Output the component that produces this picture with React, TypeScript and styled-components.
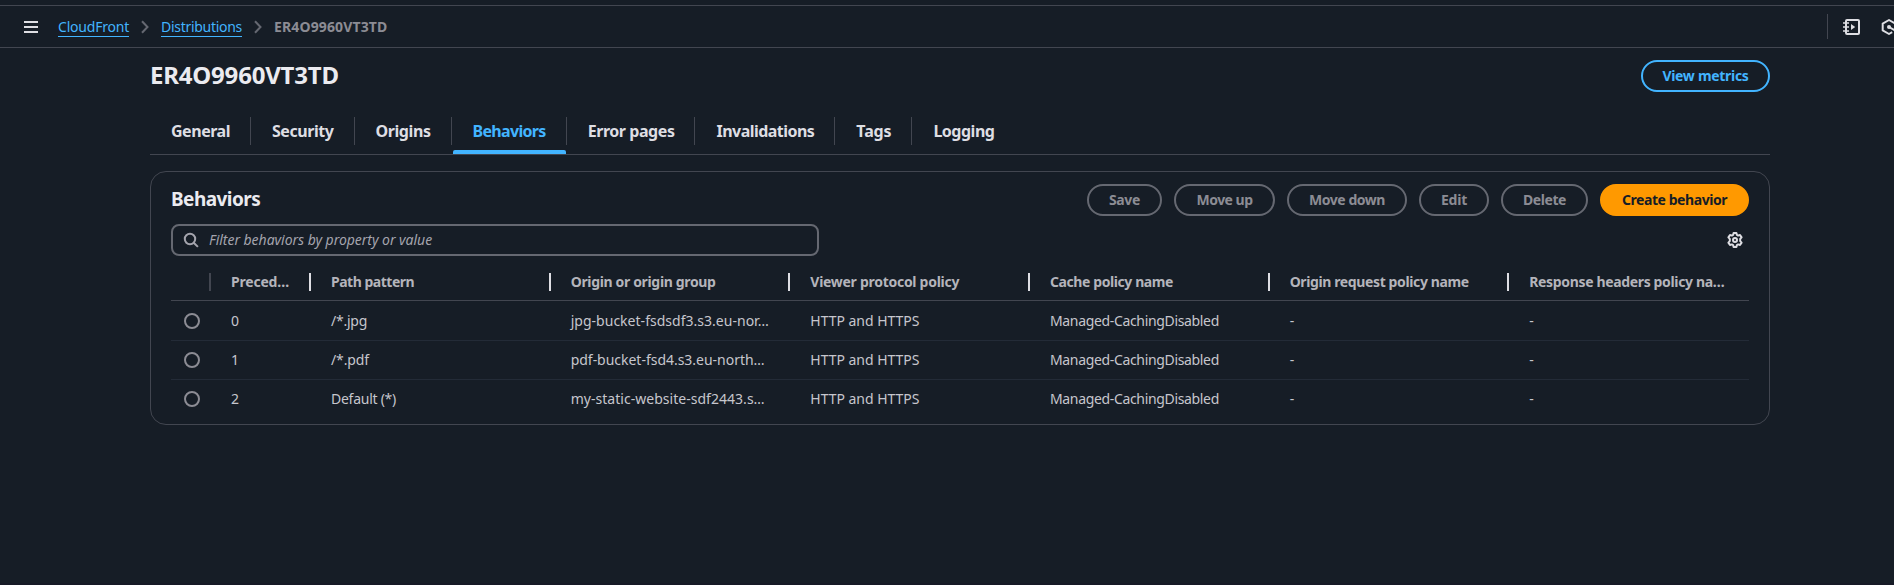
import React from "react";
import styled, { createGlobalStyle } from "styled-components";

const color = {
  page: "#161d26",
  line: "#424650",
  rowLine: "#232b37",
  control: "#656871",
  radio: "#8c8c94",
  muted: "#8c8c94",
  heading: "#ebebf0",
  tab: "#dedee3",
  header: "#b4b4bb",
  cell: "#c6c6cd",
  blue: "#42b4ff",
  orange: "#ff9900",
};

const GlobalStyle = createGlobalStyle`
  *, *::before, *::after { box-sizing: border-box; }
  html { background: ${color.page}; }
  body {
    margin: 0;
    overflow: hidden;
    color: ${color.cell};
    font: 400 14px/20px "Noto Sans", "Open Sans", sans-serif;
  }
  h1, h2 { margin: 0; }
  svg { display: block; flex: none; }
`;

const Page = styled.div`
  display: flex;
  flex-direction: column;
  height: 585px;
  padding-top: 5px;
  overflow: hidden;
`;

const Label = styled.span<{ $track?: number }>`
  letter-spacing: ${(p) => p.$track ?? 0}px;
  white-space: nowrap;
`;

const TopBar = styled.header`
  display: flex;
  align-items: center;
  justify-content: space-between;
  flex: none;
  height: 43px;
  padding-left: 23px;
  border-top: 1px solid ${color.line};
  border-bottom: 1px solid ${color.line};
`;

const Breadcrumbs = styled.nav`
  display: flex;
  align-items: center;
`;

const MenuButton = styled.button`
  display: flex;
  width: 16px;
  padding: 0;
  margin-right: 19px;
  border: 0;
  background: none;
  color: ${color.tab};
`;

const CrumbLink = styled.a`
  height: 21px;
  border-bottom: 1px solid ${color.blue};
  color: ${color.blue};
  line-height: 22px;
`;

const CurrentCrumb = styled.span`
  height: 21px;
  color: ${color.muted};
  font-weight: 700;
  line-height: 22px;
`;

const Chevron = styled.svg`
  margin: 0 12px;
  color: ${color.control};
`;

const TopTools = styled.div`
  display: flex;
  align-items: center;
  width: 67px;
  height: 25px;
  padding-left: 15px;
  gap: 21px;
  border-left: 1px solid ${color.line};
  color: ${color.tab};
`;

const Content = styled.main`
  flex: 1;
  width: 1620px;
  margin-left: 150px;
  padding-top: 12px;
`;

const TitleRow = styled.div`
  display: flex;
  align-items: center;
  justify-content: space-between;
  height: 32px;
`;

const PageTitle = styled.h1`
  height: 32px;
  color: ${color.heading};
  font-size: 24px;
  font-weight: 700;
  line-height: 30px;
`;

const buttonColors = {
  normal: { border: color.blue, text: color.blue, fill: "transparent" },
  disabled: { border: color.control, text: color.muted, fill: "transparent" },
  primary: { border: color.orange, text: "#161d26", fill: color.orange },
};

const Button = styled.button<{ $kind: keyof typeof buttonColors; $width: number }>`
  display: flex;
  align-items: center;
  justify-content: center;
  width: ${(p) => p.$width}px;
  height: 32px;
  padding: 0;
  border: 2px solid ${(p) => buttonColors[p.$kind].border};
  border-radius: 16px;
  background: ${(p) => buttonColors[p.$kind].fill};
  color: ${(p) => buttonColors[p.$kind].text};
  font: inherit;
  font-weight: 700;
`;

const TabBar = styled.div`
  display: flex;
  height: 63px;
  padding-top: 16px;
  border-bottom: 1px solid ${color.line};
`;

const Tab = styled.div<{ $active?: boolean }>`
  position: relative;
  display: flex;
  align-items: center;
  height: 46px;
  padding-left: 21px;
  color: ${(p) => (p.$active ? color.blue : color.tab)};
  font-size: 16px;
  font-weight: 700;
  line-height: 22px;

  &::after {
    content: "";
    display: ${(p) => (p.$active ? "block" : "none")};
    position: absolute;
    right: 1px;
    bottom: 0;
    left: 1px;
    height: 4px;
    border-radius: 2px 2px 0 0;
    background: ${color.blue};
  }
`;

const TabDivider = styled.span`
  width: 1px;
  height: 28px;
  margin-left: 20px;
  background: ${color.line};
`;

const Panel = styled.section`
  height: 254px;
  margin-top: 16px;
  padding: 12px 20px 0;
  border: 1px solid ${color.line};
  border-radius: 16px;
`;

const PanelHeader = styled.div`
  display: flex;
  align-items: center;
  justify-content: space-between;
`;

const PanelTitle = styled.h2`
  height: 26px;
  color: ${color.heading};
  font-size: 19px;
  font-weight: 700;
  line-height: 24px;
`;

const Actions = styled.div`
  display: flex;
  gap: 12px;
`;

const FilterRow = styled.div`
  display: flex;
  align-items: center;
  justify-content: space-between;
  margin-top: 8px;
  padding-right: 6px;
  color: ${color.tab};
`;

const SearchBox = styled.div`
  display: flex;
  align-items: center;
  width: 648px;
  height: 32px;
  padding-left: 10px;
  gap: 10px;
  border: 2px solid ${color.control};
  border-radius: 8px;
  color: #a4a4ad;
  font-style: italic;
`;

const Row = styled.div<{ $position?: "first" | "last" }>`
  display: grid;
  grid-template-columns: 39px 100px repeat(5, 239.67px) 1fr;
  align-items: center;
  height: ${(p) => (p.$position === "first" ? 40 : 39)}px;
  padding-top: ${(p) => (p.$position === "first" ? 1 : 0)}px;
  border-bottom: 1px solid ${(p) => (p.$position === "last" ? "transparent" : color.rowLine)};
`;

const HeaderRow = styled(Row)`
  height: 41px;
  margin-top: 4px;
  padding-top: 4px;
  border-bottom-color: ${color.line};
  color: ${color.header};
  font-weight: 700;
`;

const HeaderCell = styled.div`
  display: flex;
  align-items: center;
`;

const Divider = styled.span<{ $dim?: boolean }>`
  flex: none;
  width: 2px;
  height: 18px;
  margin: 0 20px 0 -1px;
  background: ${(p) => (p.$dim ? color.line : color.tab)};
`;

const Cell = styled.div`
  padding-left: 21px;
`;

const Radio = styled.span`
  width: 16px;
  height: 16px;
  margin-left: 13px;
  border: 2px solid ${color.radio};
  border-radius: 50%;
`;

const FooterEdge = styled.footer`
  flex: none;
  height: 2px;
  background: #161926;
`;

type Text = [text: string, track: number];

const tabs: Text[] = [
  ["General", -0.47],
  ["Security", -0.44],
  ["Origins", -0.42],
  ["Behaviors", -0.68],
  ["Error pages", -0.44],
  ["Invalidations", -0.53],
  ["Tags", -0.17],
  ["Logging", -0.49],
];

const actions: [string, number, number][] = [
  ["Save", -0.36, 75],
  ["Move up", -0.52, 101],
  ["Move down", -0.45, 120],
  ["Edit", -0.24, 70],
  ["Delete", -0.43, 87],
];

const columns: Text[] = [
  ["Preced…", -0.2],
  ["Path pattern", -0.48],
  ["Origin or origin group", -0.34],
  ["Viewer protocol policy", -0.28],
  ["Cache policy name", -0.41],
  ["Origin request policy name", -0.38],
  ["Response headers policy na…", -0.35],
];

const viewer: Text = ["HTTP and HTTPS", -0.03];
const cache: Text = ["Managed-CachingDisabled", -0.34];
const none: Text = ["-", 0];

const rows: Text[][] = [
  [["0", 0], ["/*.jpg", -0.25], ["jpg-bucket-fsdsdf3.s3.eu-nor…", 0.02], viewer, cache, none, none],
  [["1", 0], ["/*.pdf", -0.12], ["pdf-bucket-fsd4.s3.eu-north…", -0.02], viewer, cache, none, none],
  [["2", 0], ["Default (*)", -0.26], ["my-static-website-sdf2443.s…", 0.03], viewer, cache, none, none],
];

const Separator = () => (
  <Chevron width="8" height="14" viewBox="0 0 8 14" fill="none" stroke="currentColor" strokeWidth="2">
    <path d="M1 1.2 6.5 7 1 12.8" />
  </Chevron>
);

const MenuIcon = () => (
  <svg width="16" height="16" viewBox="0 0 16 16" fill="currentColor">
    <path d="M1 2h14v2H1zM1 7h14v2H1zM1 12h14v2H1z" />
  </svg>
);

const TutorialIcon = () => (
  <svg width="17" height="16" viewBox="0 0 17 16" fill="none" stroke="currentColor" strokeWidth="2">
    <path d="M3 4V2q0-1 1-1h11q1 0 1 1v12q0 1-1 1H4q-1 0-1-1v-2M3 4v8" strokeLinejoin="round" />
    <path d="M0 4h6M0 8h6M0 12h6" strokeWidth="1.6" />
    <path d="M8 5v6l4.2-3z" fill="currentColor" stroke="none" />
  </svg>
);

const HexIcon = () => (
  <svg width="16" height="16" viewBox="0 0 16 16" fill="none" stroke="currentColor" strokeWidth="2">
    <path d="M14.3 10.8V4.6L8 1 1.7 4.6v6.8L8 15l3.2-1.8" strokeLinejoin="round" />
    <path d="m8 8 6.3 3.6" />
    <circle cx="8" cy="8" r="2" fill="currentColor" stroke="none" />
  </svg>
);

const SearchIcon = () => (
  <svg width="16" height="16" viewBox="0 0 16 16" fill="none" stroke="currentColor" strokeWidth="2">
    <circle cx="7" cy="7" r="5.2" />
    <path d="m10.7 10.7 4.2 4.2" />
  </svg>
);

const GearIcon = () => (
  <svg width="16" height="16" viewBox="0 0 16 16" fill="none" stroke="currentColor" strokeWidth="2" strokeLinejoin="round">
    <path d="M6.6 1h2.8l.5 1.9 1.2.7 1.9-.6 1.6 2.4-1.4 1.5v2.2l1.4 1.5L13 13l-1.900-.6-1.200.7L9.400 15H6.600l-.5-1.900-1.200-.7L3 13l-1.600-2.400 1.400-1.500V6.900L1.400 5.400 3 3l1.900.6 1.200-.7z" />
    <circle cx="8" cy="8" r="2" />
  </svg>
);

export default function App() {
  return (
    <Page>
      <GlobalStyle />
      <TopBar>
        <Breadcrumbs>
          <MenuButton aria-label="Open navigation">
            <MenuIcon />
          </MenuButton>
          <CrumbLink><Label $track={-0.21}>CloudFront</Label></CrumbLink>
          <Separator />
          <CrumbLink><Label $track={-0.29}>Distributions</Label></CrumbLink>
          <Separator />
          <CurrentCrumb><Label $track={0.13}>ER4O9960VT3TD</Label></CurrentCrumb>
        </Breadcrumbs>
        <TopTools>
          <TutorialIcon />
          <HexIcon />
        </TopTools>
      </TopBar>
      <Content>
        <TitleRow>
          <PageTitle><Label $track={-0.2}>ER4O9960VT3TD</Label></PageTitle>
          <Button $kind="normal" $width={129}><Label $track={-0.3}>View metrics</Label></Button>
        </TitleRow>
        <TabBar>
          {tabs.map(([name, track], i) => (
            <Tab key={name} $active={name === "Behaviors"}>
              <Label $track={track}>{name}</Label>
              {i < tabs.length - 1 && <TabDivider />}
            </Tab>
          ))}
        </TabBar>
        <Panel>
          <PanelHeader>
            <PanelTitle><Label $track={-0.55}>Behaviors</Label></PanelTitle>
            <Actions>
              {actions.map(([name, track, width]) => (
                <Button key={name} $kind="disabled" $width={width} disabled>
                  <Label $track={track}>{name}</Label>
                </Button>
              ))}
              <Button $kind="primary" $width={149}><Label $track={-0.43}>Create behavior</Label></Button>
            </Actions>
          </PanelHeader>
          <FilterRow>
            <SearchBox>
              <SearchIcon />
              <Label $track={-0.03}>Filter behaviors by property or value</Label>
            </SearchBox>
            <GearIcon />
          </FilterRow>
          <HeaderRow>
            <span />
            {columns.map(([name, track], i) => (
              <HeaderCell key={name}>
                <Divider $dim={i === 0} />
                <Label $track={track}>{name}</Label>
              </HeaderCell>
            ))}
          </HeaderRow>
          {rows.map((cells, r) => (
            <Row key={r} $position={r === 0 ? "first" : r === rows.length - 1 ? "last" : undefined}>
              <Radio />
              {cells.map(([text, track], c) => (
                <Cell key={c}><Label $track={track}>{text}</Label></Cell>
              ))}
            </Row>
          ))}
        </Panel>
      </Content>
      <FooterEdge />
    </Page>
  );
}
